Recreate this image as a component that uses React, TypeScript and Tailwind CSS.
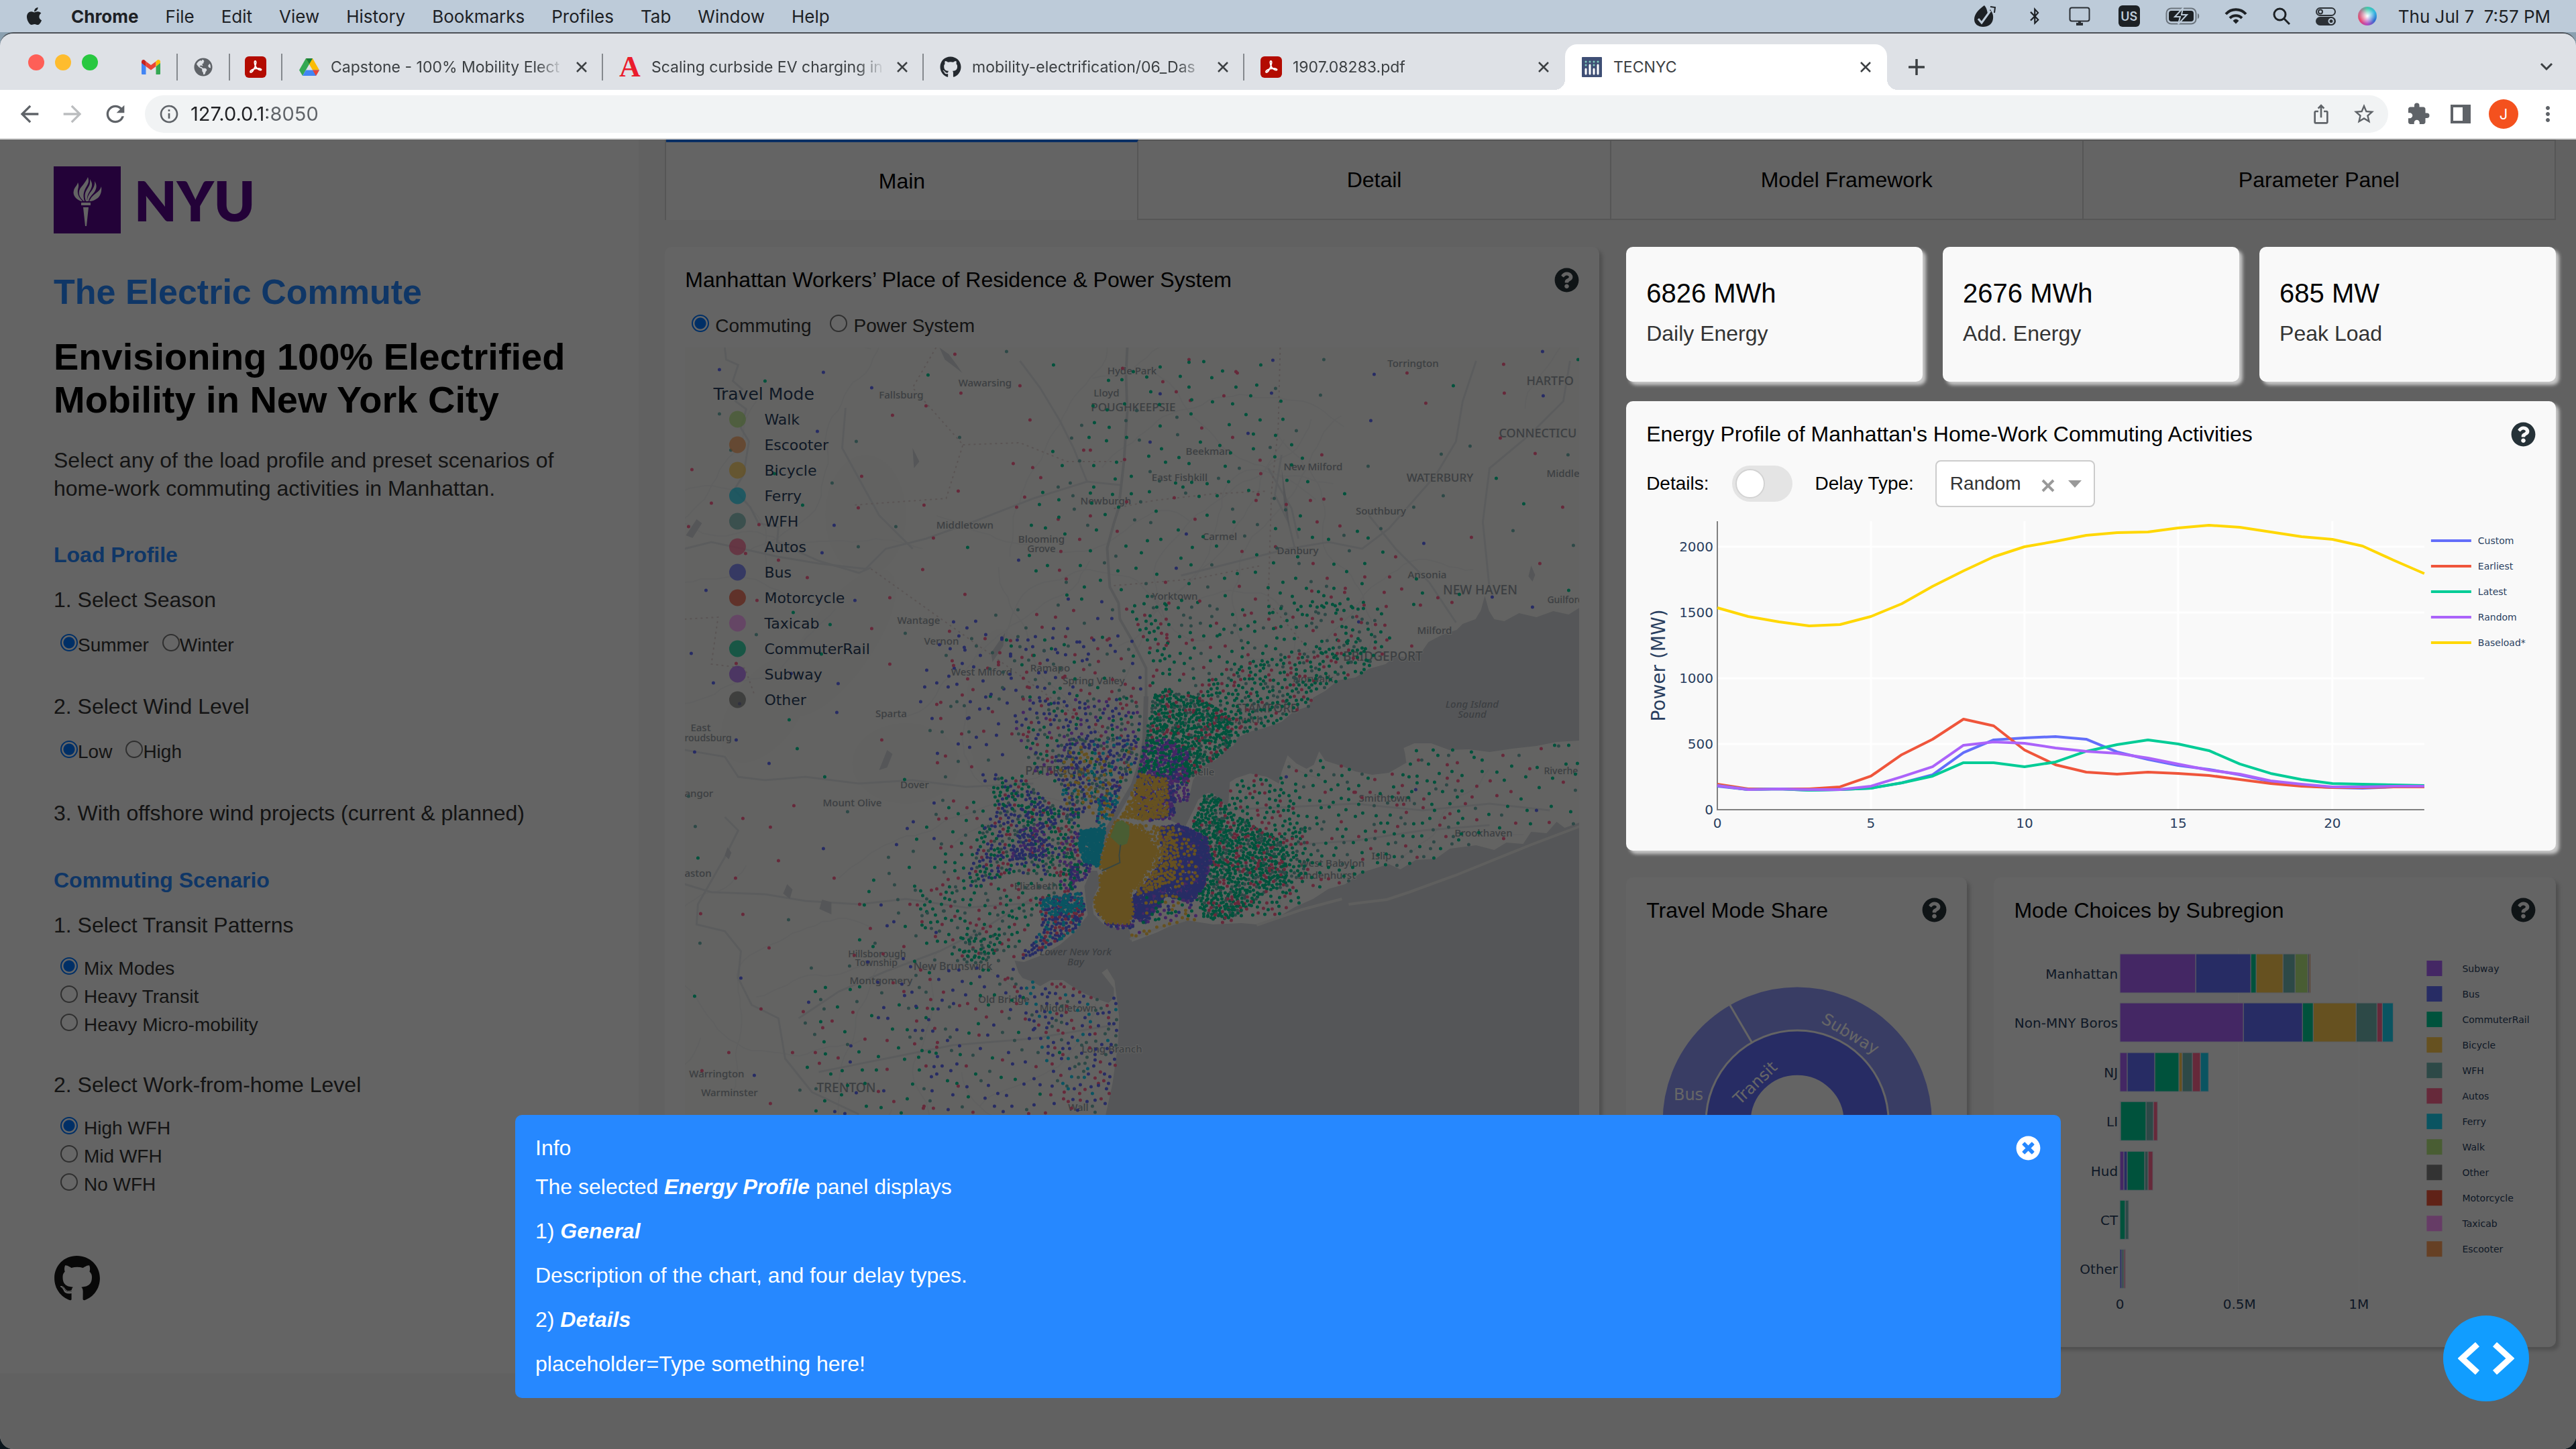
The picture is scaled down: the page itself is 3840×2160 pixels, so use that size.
import React from "react";
import {
  FaApple,
  FaBluetoothB,
  FaGithub,
  FaQuestionCircle,
  FaTimesCircle,
  FaGlobeAmericas,
} from "react-icons/fa";
import { MdExtension, MdStarBorder, MdInfoOutline, MdRefresh, MdArrowBack, MdArrowForward, MdIosShare, MdMoreVert } from "react-icons/md";

/* ---------- palette ---------- */

const MODE = {
  Walk: "#B6E880",
  Escooter: "#FFA15A",
  Bicycle: "#FECB52",
  Ferry: "#19D3F3",
  WFH: "#72B7B2",
  Autos: "#FF6692",
  Bus: "#636EFA",
  Motorcycle: "#EF553B",
  Taxicab: "#FF97FF",
  CommuterRail: "#00CC96",
  Subway: "#AB63FA",
  Other: "#7F7F7F",
} as const;
type Mode = keyof typeof MODE;

/* ---------- macOS menu bar ---------- */

const MENUS = ["File", "Edit", "View", "History", "Bookmarks", "Profiles", "Tab", "Window", "Help"];

function MenuBar() {
  return (
    <header className="flex h-12 shrink-0 items-center justify-between bg-[#bdcbd9] pl-9 pr-[38px] text-[26px] text-[#1d2125]">
      <nav className="flex items-center gap-10">
        <FaApple className="size-[30px]" />
        <button className="font-bold">Chrome</button>
        {MENUS.map((m) => (
          <button key={m}>{m}</button>
        ))}
      </nav>
      <div className="flex items-center">
        <svg viewBox="0 0 34 34" className="mr-[44px] size-[34px]">
          <path d="M16 1C9 6 1 13 1 22c0 7 6 11 13 11 8 0 14-4 15-12 1-7-2-10-4-14-2 2-3 4-4 6C20 8 19 4 16 1z" fill="#1d2125" />
          <path d="M7 21l5 6L25 9" fill="none" stroke="#bdcbd9" strokeWidth="3" />
          <path d="M25 3l7 1-1 8" fill="none" stroke="#1d2125" strokeWidth="2" />
        </svg>
        <FaBluetoothB className="mr-[38px] size-[26px]" />
        <svg viewBox="0 0 32 28" className="mr-[42px] h-[28px] w-[32px]" fill="none" stroke="#2c3136" strokeWidth="2">
          <rect x="1.5" y="1.5" width="29" height="20" rx="3" />
          <path d="M11 26h10M16 22v4" strokeWidth="4" />
        </svg>
        <span className="mr-[38px] flex size-8 items-center justify-center rounded-[6px] bg-[#1d2125] text-[18px] font-semibold text-[#bdcbd9]">
          US
        </span>
        <svg viewBox="0 0 52 26" className="mr-[36px] h-[26px] w-[52px]">
          <rect x="1.5" y="1.5" width="44" height="23" rx="7" fill="none" stroke="#6b747d" strokeWidth="2" />
          <rect x="5" y="5" width="37" height="16" rx="4" fill="#1d2125" />
          <path d="M48 9c3 1 3 7 0 8z" fill="#6b747d" />
          <path d="M26 1L14 14h8l-3 11 13-14h-8z" fill="#1d2125" stroke="#bdcbd9" strokeWidth="2" />
        </svg>
        <svg viewBox="0 0 34 24" className="mr-[38px] h-[24px] w-[34px]" fill="none" stroke="#1d2125" strokeWidth="4">
          <path d="M2 9C10 0 24 0 32 9" />
          <path d="M8 15c5-5 13-5 18 0" />
          <path d="M14 19c2-2 4-2 6 0l-3 3z" fill="#1d2125" strokeWidth="2" />
        </svg>
        <svg viewBox="0 0 26 26" className="mr-[38px] size-[26px]" fill="none" stroke="#1d2125" strokeWidth="3">
          <circle cx="10.500" cy="10.500" r="8.500" />
          <path d="M17 17l8 8" />
        </svg>
        <svg viewBox="0 0 30 27" className="mr-[33px] h-[27px] w-[30px]" stroke="#2c3136" strokeWidth="2">
          <rect x="1" y="1" width="28" height="11" rx="5.500" fill="none" />
          <circle cx="7" cy="6.500" r="3" fill="none" />
          <rect x="1" y="15" width="28" height="11" rx="5.500" fill="#2c3136" />
          <circle cx="23" cy="20.500" r="3.500" fill="#2c3136" stroke="#bdcbd9" />
        </svg>
        <span className="mr-[32px] size-7 rounded-full bg-[conic-gradient(#3fc9a8,#35b8e0,#2d6fd0,#b04ac0,#e8456f,#c0708f,#3fc9a8)]">
          <span className="block size-7 rounded-full bg-[radial-gradient(circle,#fff_0,transparent_60%)]" />
        </span>
        <span className="whitespace-pre">Thu Jul 7  7:57 PM</span>
      </div>
    </header>
  );
}

/* ---------- favicons ---------- */

const Gmail = () => (
  <svg viewBox="0 0 28 22" className="h-[22px] w-[28px]">
    <path d="M0 4v16.500c0 1 .5 1.500 1.500 1.500H6.500V10z" fill="#4285f4" />
    <path d="M28 4v16.500c0 1-.5 1.500-1.500 1.500h-5V10z" fill="#34a853" />
    <path d="M6.500 10V2.500L14 8l7.500-5.500V10L14 15.500z" fill="#ea4335" />
    <path d="M0 5V3C0 .5 3-1 5 .9l1.500 1.600V10z" fill="#c5221f" />
    <path d="M28 5V3c0-2.500-3-4-5-2.100l-1.500 1.600V10z" fill="#fbbc04" />
  </svg>
);
const Acrobat = () => (
  <svg viewBox="0 0 32 32" className="size-8">
    <rect width="32" height="32" rx="6" fill="#b30b00" />
    <path
      d="M15.500 7c-2 0-1 5 .5 8s5 6 8 5.500c2-1-1-3-6-2.500-4 .3-10 2.500-10 5 0 2 3 1 5.500-4S18 7 15.500 7z"
      fill="none"
      stroke="#fff"
      strokeWidth="1.800"
    />
  </svg>
);
const Drive = () => (
  <svg viewBox="0 0 30 26" className="h-[26px] w-[30px]">
    <path d="M10 0h10l-15 26L0 17.500z" fill="#34a853" />
    <path d="M10 0h10l10 17.500H20z" fill="#fbbc04" />
    <path d="M5 26l5-8.500h20L25 26z" fill="#4285f4" />
    <path d="M20 17.500h10L25 26z" fill="#ea4335" />
    <path d="M10 0h10l-5 8.700z" fill="#188038" />
  </svg>
);
const LetterA = () => (
  <span className="flex w-8 justify-center font-['Liberation_Serif',serif] text-[44px] font-bold leading-8 text-[#ea1c2c]">A</span>
);
const PlotlyIcon = () => (
  <svg viewBox="0 0 30 30" className="size-[30px]">
    <rect width="30" height="30" rx="1" fill="#3f4f75" />
    {[6, 12, 18, 24].map((x, i) => (
      <g key={x}>
        <circle cx={x} cy="7" r="1.500" fill="#80cfbe" />
        {i % 2 === 0 && <circle cx={x} cy="12" r="1.500" fill="#80cfbe" />}
        <path d={i % 2 ? `M${x} 12v13` : `M${x} 18v7`} stroke="#fff" strokeWidth="3" strokeLinecap="round" />
      </g>
    ))}
  </svg>
);

function CloseX() {
  return (
    <svg viewBox="0 0 16 16" className="size-4" stroke="#3c4043" strokeWidth="2.500">
      <path d="M1 1l14 14M15 1L1 15" />
    </svg>
  );
}

function Pinned({ children, label }: { children: React.ReactNode; label: string }) {
  return (
    <button aria-label={label} className="flex h-10 w-[78px] items-center justify-center border-r-2 border-[#85898e]">
      {children}
    </button>
  );
}

function BrowserTab({ icon, title, last }: { icon: React.ReactNode; title: string; last?: boolean }) {
  return (
    <div className={`flex h-10 w-[478px] items-center border-r-2 pl-6 pr-[22px] ${last ? "border-transparent" : "border-[#85898e]"}`}>
      <span className="flex w-8 shrink-0 justify-center">{icon}</span>
      <span className="ml-4 mr-[18px] flex-1 overflow-hidden whitespace-nowrap [mask-image:linear-gradient(to_right,#000_88%,transparent)]">
        {title}
      </span>
      <button aria-label="Close tab">
        <CloseX />
      </button>
    </div>
  );
}

function TabStrip() {
  return (
    <div className="flex h-[84px] shrink-0 items-end bg-[#dee1e6] pl-[42px] pr-[34px] text-[23px] text-[#3c4043]">
      <div className="mr-[41px] flex gap-4 self-start pt-[31px]">
        <span className="size-6 rounded-full bg-[#fe5f57]" />
        <span className="size-6 rounded-full bg-[#febc2e]" />
        <span className="size-6 rounded-full bg-[#28c840]" />
      </div>
      <div className="flex h-[68px] flex-1 items-center">
        <Pinned label="Gmail"><Gmail /></Pinned>
        <Pinned label="Web page"><FaGlobeAmericas className="size-7 text-[#5f6368]" /></Pinned>
        <Pinned label="PDF"><Acrobat /></Pinned>
        <BrowserTab icon={<Drive />} title="Capstone - 100% Mobility Elect" />
        <BrowserTab icon={<LetterA />} title="Scaling curbside EV charging in" />
        <BrowserTab icon={<FaGithub className="size-8 text-[#24292f]" />} title="mobility-electrification/06_Das" />
        <BrowserTab icon={<Acrobat />} title="1907.08283.pdf" last />
        <div className="relative flex h-full w-[480px] items-center rounded-t-[18px] bg-white pl-6 pr-6">
          <span className="absolute -left-4 bottom-0 size-4 bg-[radial-gradient(circle_at_0_0,transparent_16px,#fff_16px)]" />
          <span className="absolute -right-4 bottom-0 size-4 bg-[radial-gradient(circle_at_100%_0,transparent_16px,#fff_16px)]" />
          <span className="flex w-8 shrink-0 justify-center"><PlotlyIcon /></span>
          <span className="ml-4 flex-1">TECNYC</span>
          <button aria-label="Close tab"><CloseX /></button>
        </div>
        <button aria-label="New tab" className="ml-8">
          <svg viewBox="0 0 24 24" className="size-6" stroke="#3c4043" strokeWidth="3.500" strokeLinecap="round">
            <path d="M12 1v22M1 12h22" />
          </svg>
        </button>
        <button aria-label="Search tabs" className="ml-auto">
          <svg viewBox="0 0 20 12" className="h-3 w-5" fill="none" stroke="#3c4043" strokeWidth="3">
            <path d="M2 1l8 8 8-8" />
          </svg>
        </button>
      </div>
    </div>
  );
}

function Toolbar() {
  return (
    <div className="flex h-[74px] shrink-0 items-center border-b-2 border-[#d5d5d5] bg-white pl-6 pr-6 text-[#5f6368]">
      <button aria-label="Back" className="w-16"><MdArrowBack className="size-10" /></button>
      <button aria-label="Forward" className="w-16 text-[#bbbdbf]"><MdArrowForward className="size-10" /></button>
      <button aria-label="Reload" className="w-16"><MdRefresh className="size-10" /></button>
      <div className="flex h-14 flex-1 items-center rounded-full bg-[#f1f3f4] pl-5 pr-[18px]">
        <MdInfoOutline className="mr-4 size-8" />
        <input
          aria-label="Address"
          defaultValue="127.0.0.1:8050"
          className="min-w-0 flex-1 bg-[linear-gradient(to_right,#202124_114px,#5f6368_114px)] bg-clip-text text-[29px] text-transparent outline-none"
        />
        <button aria-label="Share" className="mr-[30px]"><MdIosShare className="size-8" /></button>
        <button aria-label="Bookmark"><MdStarBorder className="size-9" /></button>
      </div>
      <button aria-label="Extensions" className="ml-[27px]"><MdExtension className="size-9" /></button>
      <button aria-label="Side panel" className="ml-[30px]">
        <svg viewBox="0 0 30 28" className="h-7 w-[30px]" fill="none" stroke="#5f6368">
          <rect x="2" y="2" width="26" height="24" strokeWidth="4" />
          <path d="M23 2v24" strokeWidth="10" />
        </svg>
      </button>
      <button className="ml-[27px] size-11 rounded-full bg-[#f4511e] text-[22px] text-white">J</button>
      <button aria-label="More" className="ml-[26px]"><MdMoreVert className="size-9" /></button>
    </div>
  );
}

/* ---------- sidebar ---------- */

function Radio({ name, label, checked, gap }: { name: string; label: string; checked?: boolean; gap?: boolean }) {
  return (
    <label className={`flex items-baseline ${gap ? "gap-[9px]" : ""}`}>
      <input
        type="radio"
        name={name}
        defaultChecked={checked}
        className="size-[26px] shrink-0 appearance-none rounded-full border-2 border-[#767676] bg-white bg-clip-padding checked:border-[#0075ff] checked:bg-[radial-gradient(circle,#0075ff_8px,#fff_9px)]"
      />
      <span>{label}</span>
    </label>
  );
}

function StackedRadios({ name, items }: { name: string; items: string[] }) {
  return (
    <div className="mt-6 flex flex-col pl-[10px] text-[28px] leading-[42px]">
      {items.map((t, i) => (
        <Radio key={t} name={name} label={t} checked={i === 0} gap />
      ))}
    </div>
  );
}

function InlineRadios({ name, items }: { name: string; items: string[] }) {
  return (
    <div className="mt-[31px] flex gap-[20px] pl-[10px] text-[28px] leading-8">
      {items.map((t, i) => (
        <Radio key={t} name={name} label={t} checked={i === 0} />
      ))}
    </div>
  );
}

function Sidebar() {
  return (
    <aside className="w-[24.8%] shrink-0 self-start bg-[#f9f9f9] px-20 pb-[106px] pt-10 text-[32px] leading-10 text-[#333]">
      <div className="flex h-[100px] items-center gap-[20px] text-[#57068c]">
        <svg viewBox="0 0 100 100" className="size-[100px]">
          <rect width="100" height="100" fill="#57068c" />
          <g fill="#f9f9f9">
            <path d="M41 52c-8-3-13-9-11-16 1-5 5-7 6-12 2 4 1 7 0 11-1 6 2 12 7 17z" />
            <path d="M45 52c-7-6-9-12-6-18 2-4 8-9 12-18 2 6 1 9-2 14-4 7-6 12-3 22z" />
            <path d="M48 52c-3-9-1-14 3-20 2-3 4-7 3-13 4 6 4 10 1 16-3 5-6 9-5 17z" />
            <path d="M50 52c0-7 3-11 6-15 3-4 6-9 5-15 4 6 3 11 0 16-4 5-8 8-9 14z" />
            <path d="M53 52c3-6 5-8 10-12 4-3 7-6 8-10 1 7-1 13-5 17-4 3-8 5-13 5z" />
            <path d="M41 54h14v4H41zM44 61h8l-3 28h-2z" />
          </g>
        </svg>
        <span className="font-['Lato',sans-serif] text-[82px] font-extrabold leading-[100px]">NYU</span>
      </div>
      <h1 className="mt-[55px] text-[52px] font-bold leading-[64px] text-[#2688ff]">The Electric Commute</h1>
      <h2 className="mt-[33px] text-[56px] font-bold leading-[64px] text-black">
        Envisioning 100% Electrified
        <br />
        Mobility in New York City
      </h2>
      <p className="mt-[37px] leading-[42px]">
        Select any of the load profile and preset scenarios of
        <br />
        home-work commuting activities in Manhattan.
      </p>
      <h3 className="mt-[58px] font-bold text-[#2688ff]">Load Profile</h3>
      <p className="mt-[27px]">1. Select Season</p>
      <InlineRadios name="season" items={["Summer", "Winter"]} />
      <p className="mt-[55px]">2. Select Wind Level</p>
      <InlineRadios name="wind" items={["Low", "High"]} />
      <p className="mt-[55px]">3. With offshore wind projects (current &amp; planned)</p>
      <h3 className="mt-[60px] font-bold text-[#2688ff]">Commuting Scenario</h3>
      <p className="mt-[27px]">1. Select Transit Patterns</p>
      <StackedRadios name="transit" items={["Mix Modes", "Heavy Transit", "Heavy Micro-mobility"]} />
      <p className="mt-12">2. Select Work-from-home Level</p>
      <StackedRadios name="wfh" items={["High WFH", "Mid WFH", "No WFH"]} />
      <a href="#github" aria-label="GitHub" className="mt-[84px] block">
        <FaGithub className="size-[70px] text-[#141414]" />
      </a>
    </aside>
  );
}

/* ---------- map ---------- */

type Pt = [number, number];

const SOUND: Pt[] = [
  [1334, 388], [1318, 398], [1295, 393], [1270, 402], [1244, 396], [1222, 408], [1207, 405], [1199, 392], [1193, 370], [1187, 392], [1179, 405], [1160, 412],
  [1151, 421], [1130, 428], [1109, 439], [1100, 452], [1076, 462], [1060, 460], [1045, 472], [1020, 479], [1000, 492], [974, 496], [955, 512], [937, 522], [930, 535],
  [909, 542], [890, 558], [862, 568], [845, 572], [825, 581], [818, 594], [809, 598], [792, 615], [780, 620], [767, 630], [758, 645], [754, 662], [749, 677],
  [735, 676], [727, 682], [732, 694], [722, 704], [746, 715], [756, 695], [766, 674], [780, 664], [790, 666], [800, 676], [808, 684], [811, 677], [813, 648], [822, 642], [843, 635],
  [868, 640], [886, 650], [890, 633], [899, 608], [912, 620], [927, 628], [938, 622], [946, 602], [955, 616], [980, 624], [1000, 632],
  [1025, 637], [1050, 634], [1076, 619], [1074, 605], [1072, 597], [1088, 590], [1113, 590], [1140, 600], [1169, 599], [1200, 603], [1234, 598],
  [1270, 594], [1300, 588], [1334, 586],
];
const OCEAN: Pt[] = [
  [1334, 708], [1312, 716], [1300, 707], [1285, 724], [1262, 722], [1250, 740], [1225, 738], [1207, 749], [1180, 742], [1141, 747], [1120, 762],
  [1090, 764], [1067, 778], [1050, 770], [1008, 783], [985, 800], [960, 807], [937, 822], [910, 834], [890, 846], [853, 860], [830, 858],
  [788, 860], [750, 854], [725, 862], [704, 872], [667, 886], [665, 876], [662, 864], [645, 866], [625, 860], [610, 845], [608, 832], [611, 817], [620, 798], [615, 780],
  [606, 780], [596, 803], [599, 832], [601, 846], [582, 871], [560, 890], [535, 905], [506, 916], [492, 914], [498, 932],
  [504, 940], [520, 946], [530, 952], [546, 943], [564, 943], [586, 958], [611, 970], [632, 977], [640, 970], [640, 955], [622, 932], [630, 926], [641, 944],
  [648, 999], [646, 1039], [638, 1097], [628, 1143], [600, 1460], [1334, 1460],
];
const HUDSON: Pt[] = [
  [618, 769], [622, 745], [630, 720], [648, 688], [669, 652], [680, 620], [686, 585], [688, 520], [688, 478], [668, 438], [649, 405], [647, 381], [634, 357],
  [630, 299], [640, 262], [647, 240], [655, 170], [660, 95], [658, 40], [660, 0],
];

const toPoints = (p: Pt[]) => p.map((q) => q.join(",")).join(" ");

function inside(x: number, y: number, poly: Pt[]) {
  let hit = false;
  for (let i = 0, j = poly.length - 1; i < poly.length; j = i++) {
    const [xi, yi] = poly[i];
    const [xj, yj] = poly[j];
    if (yi > y !== yj > y && x < ((xj - xi) * (y - yi)) / (yj - yi) + xi) hit = !hit;
  }
  return hit;
}

function makeRandom(seed: number) {
  let s = seed;
  return () => {
    s = (s * 1664525 + 1013904223) >>> 0;
    return s / 4294967296;
  };
}

/* Zones of the metro core are listed on a finer grid than the map itself. */
const core = (p: Pt[]): Pt[] => p.map(([x, y]) => [378 + x * 0.4847, 381 + y * 0.4847]);

const G: Mode = "CommuterRail";
const B: Mode = "Bus";
const A: Mode = "Autos";
const W: Mode = "WFH";
const S: Mode = "Subway";
const F: Mode = "Ferry";
const Y: Mode = "Bicycle";

/* [outline, spacing between dots, modes] */
type Zone = [Pt[], number, Mode[]];
const ZONES: Zone[] = [
  [[[0, 0], [1334, 0], [1334, 700], [660, 640], [620, 1143], [0, 1143]], 66, [A, B, W, A, G]],
  [[[655, 20], [860, 20], [980, 250], [1150, 380], [900, 400], [660, 400], [520, 360], [500, 200]], 28, [G, G, G, G, A, W]],
  [[[380, 420], [530, 370], [640, 380], [640, 430], [378, 620], [340, 500]], 25, [B, A, W, B]],
  [[[290, 770], [378, 660], [400, 920], [230, 930]], 26, [G, G, A, W, B]],
  [[[170, 950], [378, 930], [378, 1143], [190, 1143]], 23, [G, G, G, A, B, W]],
  [core([[580, 0], [700, 0], [720, 280], [665, 280], [640, 130]]), 11, [G, G, G, G, A]],
  [core([[700, 0], [1300, 0], [1400, 120], [1330, 200], [1130, 150], [860, 220], [780, 280], [700, 280]]), 16, [G, G, G, W, A]],
  [core([[1130, -80], [1350, 0], [1400, 120], [1250, 120], [1130, 100]]), 15, [G, G, G, W, A]],
  [core([[780, 290], [860, 220], [960, 180], [1130, 150], [1290, 110], [1350, 210], [1200, 300], [1100, 360], [960, 420], [880, 440], [860, 360]]), 8, [G, G, G, G, W, A]],
  [core([[665, 280], [700, 270], [800, 290], [900, 350], [900, 440], [800, 520], [765, 560], [735, 550], [770, 450], [700, 415], [636, 430]]), 5, [G, G, G, G, G, A, W]],
  [core([[634, 430], [700, 415], [770, 450], [772, 540], [740, 550], [690, 535], [616, 525]]), 4, [S, S, B, G, G]],
  [core([[690, 535], [770, 530], [772, 610], [740, 670], [690, 620]]), 6, [S, S, B]],
  [core([[200, 100], [600, 100], [632, 290], [260, 300]]), 15, [B, A, W, G, B]],
  [core([[0, 100], [200, 100], [260, 300], [200, 540], [0, 540]]), 24, [B, A, W, B]],
  [core([[280, 300], [610, 290], [630, 380], [600, 540], [500, 600], [420, 650], [380, 560], [300, 520], [230, 380]]), 9, [B, G, W, A, B, S]],
  [core([[370, 420], [610, 410], [585, 560], [480, 620], [400, 680], [370, 540]]), 8, [B, B, Y, W, F, B]],
  [core([[380, 450], [540, 480], [520, 640], [400, 660]]), 13, [Y]],
  [core([[170, 540], [260, 530], [330, 610], [440, 640], [430, 760], [400, 840], [220, 830], [130, 870], [80, 880], [130, 720], [170, 620]]), 7, [G, B, W, A, B, G]],
  [core([[210, 560], [300, 600], [380, 640], [360, 700], [200, 640]]), 9, [G, B]],
  [core([[250, 690], [330, 680], [340, 780], [220, 790]]), 6, [B, S, B]],
  [core([[380, 720], [430, 700], [440, 800], [400, 900], [370, 870]]), 7, [S, S, G, A]],
  [core([[0, 600], [170, 600], [130, 720], [60, 900], [0, 900]]), 16, [G, W, G, A]],
  [core([[-80, 880], [320, 850], [390, 880], [320, 910], [240, 1060], [180, 1110], [60, 1100], [-40, 1010]]), 12, [G, G, W, A]],
  [core([[70, 1020], [190, 1010], [190, 1100], [80, 1110]]), 8, [G, G, W]],
  [core([[-120, 1130], [240, 1110], [300, 1330], [400, 1568], [-60, 1568]]), 19, [B, A, G, B, W]],
  [core([[200, 1150], [340, 1170], [550, 1210], [550, 1400], [515, 1568], [400, 1568], [300, 1330]]), 11, [B, F, W, B, A]],
  [core([[310, 910], [440, 890], [458, 950], [420, 1010], [330, 1060], [262, 1100], [255, 1080], [320, 1000]]), 5, [B, B, F, A, B]],
  [core([[310, 910], [440, 890], [450, 945], [360, 960]]), 5, [F]],
  [core([[495, 600], [560, 570], [555, 620], [515, 690], [480, 680]]), 5, [F, F, B, Y]],
  [core([[440, 700], [515, 690], [495, 810], [450, 800], [430, 740]]), 3, [F]],
  [core([[410, 790], [480, 810], [440, 860], [400, 890]]), 5, [S, B, G]],
  [core([[820, 585], [870, 590], [890, 640], [1000, 700], [1060, 740], [1080, 860], [1000, 900], [900, 970], [820, 970], [790, 900], [830, 800], [780, 680]]), 5, [G, G, G, G, A, G, W]],
  [core([[890, 560], [950, 520], [1070, 540], [1130, 700], [1060, 740], [890, 640]]), 10, [G, G, G, A]],
  [core([[1050, 720], [1130, 690], [1140, 850], [1060, 900]]), 7, [G, G, G, W, A]],
  [core([[820, 960], [1100, 880], [1130, 930], [1000, 970], [850, 985]]), 10, [G, G, A]],
  [core([[1060, 470], [1620, 430], [1620, 790], [1150, 880], [1120, 700]]), 15, [G, G, W, A, G]],
  [[[1160, 600], [1334, 590], [1334, 710], [1160, 745]], 24, [G, A, G, W]],
  [core([[616, 525], [720, 540], [735, 640], [720, 665], [640, 670], [600, 640]]), 4, [B, S]],
  [core([[620, 525], [700, 535], [712, 590], [705, 655], [640, 668], [560, 660], [590, 600]]), 4, [Y]],
  [core([[680, 690], [740, 680], [825, 720], [840, 800], [812, 880], [780, 920], [700, 900], [640, 985], [590, 960], [600, 900], [650, 850], [690, 780]]), 3, [B, B, B, S]],
  [core([[600, 680], [730, 690], [730, 850], [640, 890], [600, 900]]), 5, [Y]],
  [core([[720, 690], [790, 740], [800, 860], [720, 880]]), 8, [Y]],
  [core([[640, 900], [790, 900], [780, 960], [620, 985]]), 7, [B, S, G, Y]],
  [core([[592, 1015], [700, 978], [790, 955], [795, 972], [700, 1000], [600, 1030]]), 8, [Y, S]],
  [core([[510, 985], [600, 975], [600, 1000], [515, 1000]]), 4, [S, B]],
];

const YELLOW_CORE = core([
  [548, 668], [590, 680], [640, 710], [670, 760], [660, 790], [630, 840], [590, 890], [600, 950], [585, 985], [520, 982], [484, 940], [482, 910], [500, 880], [498, 840],
  [530, 815], [500, 815], [505, 780], [520, 730],
]);

function buildDots() {
  const rnd = makeRandom(20220707);
  const isWater = (x: number, y: number) => inside(x, y, SOUND) || inside(x, y, OCEAN);
  return ZONES.map(([poly, gap, modes]) => {
    const xs = poly.map((p) => p[0]);
    const ys = poly.map((p) => p[1]);
    const x0 = Math.min(...xs);
    const y0 = Math.min(...ys);
    const w = Math.max(...xs) - x0;
    const h = Math.max(...ys) - y0;
    const cell = gap;
    const grid = new Map<string, Pt[]>();
    const tries = Math.round(((w * h) / (gap * gap)) * 3);
    const min = (gap * 0.65) ** 2;
    const local: Partial<Record<Mode, string>> = {};
    for (let i = 0; i < tries; i++) {
      const x = x0 + rnd() * w;
      const y = y0 + rnd() * h;
      const m = modes[Math.floor(rnd() * modes.length)];
      if (x < 2 || x > 1332 || y < 3 || !inside(x, y, poly) || isWater(x, y)) continue;
      const gx = Math.floor(x / cell);
      const gy = Math.floor(y / cell);
      let near = false;
      for (let a = -1; a <= 1 && !near; a++) {
        for (let b = -1; b <= 1 && !near; b++) {
          const list = grid.get(`${gx + a},${gy + b}`);
          near = !!list && list.some((q) => (q[0] - x) ** 2 + (q[1] - y) ** 2 < min);
        }
      }
      if (near) continue;
      const key = `${gx},${gy}`;
      grid.set(key, [...(grid.get(key) ?? []), [x, y]]);
      local[m] = (local[m] ?? "") + `M${Math.round(x)} ${Math.round(y)}h.01`;
    }
    return local;
  });
}
const DOTS = buildDots();

function buildRoads() {
  const rnd = makeRandom(77);
  const roads: string[] = [];
  for (let i = 0; i < 60; i++) {
    let x = rnd() * 1334;
    let y = rnd() * 1143;
    let a = rnd() * 6.28;
    let d = `M${Math.round(x)} ${Math.round(y)}`;
    for (let k = 0; k < 34; k++) {
      a += (rnd() - 0.5) * 0.7;
      x += Math.cos(a) * 12;
      y += Math.sin(a) * 12;
      if (inside(x, y, SOUND) || inside(x, y, OCEAN)) break;
      d += `L${Math.round(x)} ${Math.round(y)}`;
    }
    roads.push(d);
  }
  return roads;
}
const ROADS = buildRoads();

const RIVERS = [
  "M60 0L62 18L80 26L72 50L86 62L76 80L92 92L84 120L96 140L88 190L74 212L98 238L110 262L140 268L138 290L160 300L200 318L260 336L278 328",
  "M0 300L40 290L86 300L140 312L200 322L270 330L300 300L360 285L430 260L520 225L600 200L650 205",
  "M600 200L580 150L560 110L530 60L500 20M240 90L235 150L290 250L340 300",
  "M0 600L60 610L80 640L120 645L180 640L260 650L340 645L420 655L520 650",
  "M60 700L80 720L60 760L20 830L18 860L60 870L84 900L80 940L100 980L140 1000L150 1060L190 1110L260 1143",
  "M0 800L40 812L120 815L180 825L260 830L330 822L420 835L520 828",
  "M890 160L880 220L900 260L910 300M870 180L905 240L915 285",
  "M1180 20L1160 80L1150 140L1120 190L1050 270L1010 300L960 290L900 300L820 320L740 340",
  "M170 1000L230 960L300 930L380 900L440 870L520 820M200 1080L300 1060L400 1040L520 1030L640 1010",
  "M790 690L900 685L1000 680L1100 690L1200 680L1290 690M800 740L900 742L1000 735L1100 720L1200 712",
  "M1320 20L1310 80L1260 130L1200 180L1190 260L1200 360M1020 250L1060 300L1110 350L1150 410",
];

type Label = [string, number, number, number?, ("start" | "middle")?, boolean?];
const LABELS: Label[] = [
  ["Torrington", 1086, 29], ["HARTFO", 1255, 56, 18, "start"], ["Hyde Park", 667, 40], ["Wawarsing", 448, 58],
  ["Fallsburg", 323, 76], ["Lloyd", 629, 73], ["POUGHKEEPSIE", 669, 95, 17], ["CONNECTICU", 1214, 134, 18, "start"],
  ["Beekman", 781, 160], ["New Milford", 937, 183], ["WATERBURY", 1126, 200, 17], ["Middle", 1285, 193, 15, "start"],
  ["East Fishkill", 738, 199], ["Newburgh", 628, 234], ["Southbury", 1038, 249], ["Middletown", 418, 270],
  ["Blooming", 532, 291], ["Grove", 532, 305], ["Carmel", 798, 287], ["Danbury", 914, 308], ["Ansonia", 1107, 344],
  ["NEW HAVEN", 1186, 368, 19], ["Guilford", 1286, 381, 14, "start"], ["Yorktown", 731, 376], ["Wantage", 349, 412],
  ["Milford", 1118, 427], ["Vernon", 383, 443], ["West Milford", 443, 489], ["Ramapo", 545, 483],
  ["Spring Valley", 610, 502], ["BRIDGEPORT", 1041, 467, 19], ["Norwalk", 937, 499], ["STAMFORD", 869, 544, 18],
  ["Greenwich", 824, 560], ["Sparta", 308, 551], ["Long Island", 1174, 537, 15, "middle", true],
  ["Sound", 1174, 552, 15, "middle", true], ["East", 24, 572], ["roudsburg", 0, 587, 14, "start"],
  ["PATERSON", 553, 637, 18], ["chelle", 769, 638], ["Dover", 343, 657], ["angor", 0, 670, 15, "start"],
  ["Mount Olive", 250, 684], ["Smithtown", 1044, 677], ["Riverhe", 1281, 636, 14, "start"], ["Brookhaven", 1191, 729],
  ["Islip", 1039, 763], ["West Babylon", 965, 774], ["Lindenhurst", 957, 792], ["aston", 0, 789, 15, "start"],
  ["Elizabeth", 524, 808], ["Lower New York", 583, 906, 15, "middle", true], ["Bay", 583, 921, 15, "middle", true],
  ["Hillsborough", 287, 909, 14], ["Township", 286, 922, 14], ["New Brunswick", 400, 928, 16], ["Montgomery", 293, 949],
  ["Old Bridge", 476, 977], ["Middletown", 572, 990], ["Long Branch", 637, 1051], ["Warrington", 48, 1088],
  ["TRENTON", 241, 1110, 19], ["Warminster", 67, 1116], ["Wall", 587, 1138],
];

const MAP_LEGEND: Mode[] = [
  "Walk", "Escooter", "Bicycle", "Ferry", "WFH", "Autos", "Bus", "Motorcycle", "Taxicab", "CommuterRail", "Subway", "Other",
];

function MapChart() {
  return (
    <svg viewBox="0 0 1334 1460" preserveAspectRatio="xMidYMin slice" className="mt-3 min-h-0 w-full flex-1">
      <rect width="1334" height="1460" fill="#f8f8f4" />
      <g fill="#f4f5f3">
        <ellipse cx="270" cy="250" rx="60" ry="90" />
        <ellipse cx="230" cy="440" rx="50" ry="130" transform="rotate(35 230 440)" />
        <ellipse cx="470" cy="540" rx="50" ry="120" />
        <ellipse cx="330" cy="620" rx="80" ry="60" />
        <ellipse cx="120" cy="540" rx="50" ry="90" transform="rotate(35 120 540)" />
      </g>
      <g fill="none" stroke="#eff1f1" strokeWidth="2">
        {ROADS.map((d) => (
          <path key={d} d={d} />
        ))}
      </g>
      <g fill="none" stroke="#e4e7e9" strokeWidth="3">
        {RIVERS.map((d) => (
          <path key={d} d={d} />
        ))}
      </g>
      <g fill="none" stroke="#e0d3d3" strokeWidth="2" strokeDasharray="3 5">
        <path d="M375 0L340 60L415 145L390 225L250 235M415 145L500 142L570 170L655 170" />
        <path d="M278 330L460 460L640 590M888 0L885 120L875 215L870 380L930 450" />
        <path d="M640 240L700 228L790 218L870 214M640 355L760 345L860 325" />
        <path d="M0 405L50 402L40 472L90 478L105 520" />
      </g>
      <g fill="#d4d7dc">
        <polygon points={toPoints(SOUND)} />
        <polygon points={toPoints(OCEAN)} />
        <path d="M380 0l14 10 12 16 8 12-10-8-16-12z" />
        <path d="M478 425l-3 20-16 24-2-14zM205 823l14 4 0 18-18-8zM302 600l8 6-8 20-12 4zM890 180l8 50 4 40-8-30z" />
        <path d="M2 280l16-24 8 6-14 22zM64 745l6 8-4 10-6-6zM153 800l8 8-4 14-10-8zM340 150l10 20-8 10zM1262 325l6 14-4 10-6-8z" />
      </g>
      <polyline points={toPoints(HUDSON)} fill="none" stroke="#dcdfe2" strokeWidth="4" />
      <polyline points="618,769 622,745 630,720 648,688 669,652 680,620 686,585 688,520" fill="none" stroke="#d4d7dc" strokeWidth="7" />
      <path d="M1334 714L1260 742L1149 787L1080 812L1047 823L990 830M980 822L920 838L853 861" fill="none" stroke="#eeeeea" strokeWidth="4" />
      <path d="M664 882L700 868L750 852" fill="none" stroke="#f0f0ec" strokeWidth="4" />
      <g fontFamily="Noto Sans, sans-serif" fontWeight="500" fill="#979ea6" stroke="#f4f4f1" strokeWidth="2" paintOrder="stroke">
        {LABELS.map(([t, x, y, size = 15, anchor = "middle", it]) => (
          <text key={t + x} x={x} y={y} fontSize={size} textAnchor={anchor} fontStyle={it ? "italic" : "normal"} strokeWidth={it ? 0 : 2}>
            {t}
          </text>
        ))}
      </g>
      <g fill="none" strokeLinecap="round" strokeWidth="5">
        {DOTS.map((layer, i) => (
          <g key={i}>
            {(Object.keys(layer) as Mode[]).map((m) => (
              <path key={m} d={layer[m]} stroke={MODE[m]} />
            ))}
          </g>
        ))}
      </g>
      <polygon points={toPoints(YELLOW_CORE)} fill={MODE.Bicycle} stroke={MODE.Bicycle} strokeWidth="5" strokeLinejoin="round" strokeDasharray="5 2" />
      <polygon points="645,709 652,707 661,714 661,727 658,738 650,741 637,729" fill={MODE.Walk} stroke={MODE.Walk} strokeWidth="4" />
      <path d="M650 741L648 757L649 768L636 774L622 780" fill="none" stroke="#8fb0a0" strokeWidth="2" />
      <g fontFamily="DejaVu Sans, Verdana, sans-serif" fill="#2a3f5f">
        <text x="43" y="78" fontSize="25">Travel Mode</text>
        {MAP_LEGEND.map((m, i) => (
          <g key={m} transform={`translate(0 ${107 + i * 38})`}>
            <circle cx="79" r="12.500" fill={MODE[m]} opacity="0.75" />
            <text x="119" y="8" fontSize="22">{m}</text>
          </g>
        ))}
      </g>
    </svg>
  );
}

/* ---------- energy chart ---------- */

const SERIES: { name: string; color: string; v: number[] }[] = [
  { name: "Custom", color: "#636EFA", v: [180, 155, 160, 150, 155, 165, 205, 265, 435, 530, 545, 558, 538, 440, 385, 335, 305, 265, 215, 185, 168, 165, 175, 172] },
  { name: "Earliest", color: "#EF553B", v: [195, 160, 160, 158, 172, 255, 420, 535, 688, 637, 455, 340, 285, 270, 285, 275, 262, 232, 200, 180, 168, 166, 172, 175] },
  { name: "Latest", color: "#00CC96", v: [183, 152, 158, 148, 152, 162, 205, 255, 357, 360, 325, 365, 445, 495, 530, 500, 447, 345, 275, 230, 197, 193, 188, 185] },
  { name: "Random", color: "#AB63FA", v: [185, 155, 160, 155, 155, 178, 250, 325, 490, 515, 505, 468, 445, 430, 395, 348, 302, 270, 220, 192, 175, 172, 177, 180] },
  { name: "Baseload*", color: "#FFD700", v: [1535, 1470, 1428, 1400, 1410, 1470, 1570, 1700, 1820, 1925, 2000, 2045, 2090, 2110, 2115, 2145, 2165, 2150, 2115, 2080, 2060, 2005, 1900, 1800] },
];
const ex = (i: number) => Math.round(106 + (i * 1054) / 23);
const ey = (v: number) => Math.round(437 - v * 0.1958);

function EnergyChart() {
  return (
    <svg viewBox="0 0 1326 480" className="mt-[14px] w-full" fontFamily="DejaVu Sans, Verdana, sans-serif" fill="#2a3f5f">
      <g stroke="#fff" strokeWidth="3">
        {[5, 10, 15, 20].map((i) => (
          <path key={i} d={`M${ex(i)} 7V437`} />
        ))}
        {[500, 1000, 1500, 2000].map((v) => (
          <path key={v} d={`M106 ${ey(v)}H1160`} />
        ))}
      </g>
      <path d="M106 7V437H1160" fill="none" stroke="#808080" strokeWidth="2" />
      {SERIES.map((s) => (
        <polyline
          key={s.name}
          points={s.v.map((v, i) => `${ex(i)},${ey(v)}`).join(" ")}
          fill="none"
          stroke={s.color}
          strokeWidth="4"
          strokeLinejoin="round"
        />
      ))}
      <g fontSize="20" textAnchor="end">
        {[0, 500, 1000, 1500, 2000].map((v) => (
          <text key={v} x="100" y={ey(v) + 7}>{v}</text>
        ))}
      </g>
      <g fontSize="20" textAnchor="middle">
        {[0, 5, 10, 15, 20].map((i) => (
          <text key={i} x={ex(i)} y="464">{i}</text>
        ))}
      </g>
      <text transform="translate(28 222) rotate(-90)" fontSize="28" textAnchor="middle">Power (MW)</text>
      <g fontSize="14">
        {SERIES.map((s, i) => (
          <g key={s.name} transform={`translate(1170 ${36 + i * 38})`}>
            <path d="M0 0H60" stroke={s.color} strokeWidth="4" />
            <text x="70" y="5">{s.name}</text>
          </g>
        ))}
      </g>
    </svg>
  );
}

/* ---------- sunburst ---------- */

function Sunburst() {
  return (
    <svg viewBox="0 0 448 580" className="mt-6 w-full" fontFamily="DejaVu Sans, Verdana, sans-serif">
      <g stroke="#f9f9f9" strokeWidth="3">
        <circle cx="225" cy="270" r="202" fill="#9098f9" />
        <circle cx="225" cy="270" r="136" fill="#636EFA" />
        <circle cx="225" cy="270" r="68" fill="#f9f9f9" />
        <path d="M158 153L124 95" />
      </g>
      <g fill="#fff" fontSize="24" textAnchor="middle">
        <text x="63" y="238">Bus</text>
        <text transform="translate(300 146) rotate(31)">Subway</text>
        <text transform="translate(168 218) rotate(-44)">Transit</text>
      </g>
    </svg>
  );
}

/* ---------- stacked bars ---------- */

const REGIONS: { name: string; parts: [Mode, number][] }[] = [
  { name: "Manhattan", parts: [["Subway", 113], ["Bus", 82], ["CommuterRail", 8], ["Bicycle", 40], ["WFH", 18], ["Walk", 19], ["Other", 2], ["Escooter", 2]] },
  { name: "Non-MNY Boros", parts: [["Subway", 184], ["Bus", 88], ["CommuterRail", 16], ["Bicycle", 64], ["WFH", 31], ["Autos", 8], ["Ferry", 16]] },
  { name: "NJ", parts: [["Subway", 11], ["Bus", 41], ["CommuterRail", 36], ["Bicycle", 5], ["WFH", 15], ["Autos", 12], ["Ferry", 12]] },
  { name: "LI", parts: [["Subway", 1], ["CommuterRail", 38], ["WFH", 11], ["Autos", 6]] },
  { name: "Hud", parts: [["Subway", 6], ["Bus", 5], ["CommuterRail", 26], ["WFH", 5], ["Autos", 7]] },
  { name: "CT", parts: [["CommuterRail", 8], ["WFH", 5]] },
  { name: "Other", parts: [["Bus", 3], ["WFH", 3], ["Autos", 2]] },
];
const BAR_LEGEND: Mode[] = [
  "Subway", "Bus", "CommuterRail", "Bicycle", "WFH", "Autos", "Ferry", "Walk", "Other", "Motorcycle", "Taxicab", "Escooter",
];

function RegionBars() {
  return (
    <svg viewBox="0 0 777 570" className="mt-6 w-full" fontFamily="DejaVu Sans, Verdana, sans-serif" fill="#2a3f5f">
      <g stroke="#fff" strokeWidth="2">
        <path d="M335 12V528M514 12V528" />
      </g>
      {REGIONS.map((r, i) => {
        let x = 158;
        return (
          <g key={r.name} transform={`translate(0 ${Math.round(20 + i * 73.4)})`}>
            <text x="155" y="37" fontSize="20" textAnchor="end">{r.name}</text>
            {r.parts.map(([m, w]) => {
              const at = x;
              x += w;
              return <rect key={m} x={at} width={w} height="58" fill={MODE[m]} stroke="#e5ecf6" strokeWidth="1" />;
            })}
          </g>
        );
      })}
      <g fontSize="20" textAnchor="middle">
        <text x="158" y="549">0</text>
        <text x="336" y="549">0.5M</text>
        <text x="514" y="549">1M</text>
      </g>
      <g fontSize="14">
        {BAR_LEGEND.map((m, i) => (
          <g key={m} transform={`translate(615 ${30 + i * 38})`}>
            <rect width="23" height="23" fill={MODE[m]} />
            <text x="53" y="17">{m}</text>
          </g>
        ))}
      </g>
    </svg>
  );
}

/* ---------- panels ---------- */

const CARD = "rounded-[10px] bg-[#f9f9f9] shadow-[5px_5px_5px_#c8c8c8]";

function CardTitle({ children }: { children: React.ReactNode }) {
  return (
    <div className="flex items-center justify-between leading-[42px]">
      <h4 className="text-[32px] text-black">{children}</h4>
      <button aria-label="Help">
        <FaQuestionCircle className="size-[37px] text-[#263238]" />
      </button>
    </div>
  );
}

const STATS = [
  ["6826 MWh", "Daily Energy"],
  ["2676 MWh", "Add. Energy"],
  ["685 MW", "Peak Load"],
];

function Main() {
  return (
    <main className="flex flex-1 flex-col pb-[152px] pl-[39px] pr-[30px]">
      <div role="tablist" className="grid h-[120px] grid-cols-4 border-l-2 border-[#d6d6d6] bg-[#f9f9f9] text-[32px] text-black">
        {["Main", "Detail", "Model Framework", "Parameter Panel"].map((t, i) => (
          <button
            key={t}
            role="tab"
            aria-selected={i === 0}
            className={
              i === 0
                ? "border-r-2 border-t-4 border-r-[#d6d6d6] border-t-[#1975fa]"
                : "border-b-2 border-r-2 border-t-2 border-[#d6d6d6]"
            }
          >
            {t}
          </button>
        ))}
      </div>
      <div className="mt-10 grid flex-1 grid-cols-[1393fr_1386fr] gap-10">
        <section className={`flex flex-col px-[30px] pb-[30px] pt-7 ${CARD}`}>
          <CardTitle>Manhattan Workers’ Place of Residence &amp; Power System</CardTitle>
          <div className="mt-7 flex gap-[28px] pl-[10px] text-[28px] leading-10 text-[#333]">
            <Radio name="layer" label="Commuting" checked gap />
            <Radio name="layer" label="Power System" gap />
          </div>
          <MapChart />
        </section>
        <div className="flex flex-col">
          <div className="grid grid-cols-3 gap-[30px]">
            {STATS.map(([v, l]) => (
              <div key={l} className={`relative z-20 h-[201px] px-[30px] pt-[43px] ${CARD}`}>
                <p className="text-[40px] leading-[52px] text-black">{v}</p>
                <p className="mt-[13px] text-[32px] leading-[42px] text-[#333]">{l}</p>
              </div>
            ))}
          </div>
          <section className={`relative z-20 mt-[29px] px-[30px] pb-[18px] pt-7 ${CARD}`}>
            <CardTitle>Energy Profile of Manhattan's Home-Work Commuting Activities</CardTitle>
            <div className="mt-[18px] flex items-center text-[28px] text-black">
              <label htmlFor="details">Details:</label>
              <input
                id="details"
                type="checkbox"
                className="ml-[34px] flex h-[54px] w-[90px] appearance-none items-center rounded-full bg-[#e4e4e4] pl-[5px] before:size-[44px] before:rounded-full before:border-2 before:border-[#d3d3d3] before:bg-white before:content-['']"
              />
              <label htmlFor="delay" className="ml-[34px]">Delay Type:</label>
              <div className="relative ml-8 h-[70px] w-[238px]">
                <select id="delay" className="size-full appearance-none rounded-[8px] border-2 border-[#ccc] bg-white pl-5 text-[#333]">
                  <option>Random</option>
                  <option>Custom</option>
                  <option>Earliest</option>
                  <option>Latest</option>
                </select>
                <svg viewBox="0 0 60 20" className="pointer-events-none absolute right-5 top-[28px] h-5 w-[60px]">
                  <path d="M2 2l16 16M18 2L2 18" stroke="#999" strokeWidth="4" />
                  <path d="M40 2h20l-10 11z" fill="#999" />
                </svg>
              </div>
            </div>
            <EnergyChart />
          </section>
          <div className="mt-10 grid flex-1 grid-cols-[508fr_837fr] gap-10">
            <section className={`px-[30px] pt-7 ${CARD}`}>
              <CardTitle>Travel Mode Share</CardTitle>
              <Sunburst />
            </section>
            <section className={`px-[30px] pt-7 ${CARD}`}>
              <CardTitle>Mode Choices by Subregion</CardTitle>
              <RegionBars />
            </section>
          </div>
        </div>
      </div>
    </main>
  );
}

function InfoDialog() {
  return (
    <div
      role="dialog"
      aria-label="Info"
      className="absolute bottom-[76px] left-[20%] right-[20%] z-30 rounded-[10px] bg-[#2688ff] px-[30px] pb-[30px] pt-7 text-[32px] leading-[42px] text-white"
    >
      <div className="flex items-center justify-between">
        <h4>Info</h4>
        <button aria-label="Close">
          <FaTimesCircle className="size-[37px]" />
        </button>
      </div>
      <div className="mt-4 flex flex-col gap-6">
        <p>The selected <strong><em>Energy Profile</em></strong> panel displays</p>
        <p>1) <strong><em>General</em></strong></p>
        <p>Description of the chart, and four delay types.</p>
        <p>2) <strong><em>Details</em></strong></p>
        <p>placeholder=Type something here!</p>
      </div>
    </div>
  );
}

export default function App() {
  return (
    <div className="flex min-h-screen flex-col bg-linear-to-b from-[#8ea4b4] to-[#0c161d] font-['Inter',sans-serif]">
      <MenuBar />
      <div className="flex flex-1 flex-col overflow-hidden rounded-[20px] border-t-2 border-[#4c5157]">
        <TabStrip />
        <Toolbar />
        <div className="relative flex flex-1 bg-[#f2f2f2] font-['Liberation_Sans',Arial,sans-serif]">
          <Sidebar />
          <Main />
          <div className="absolute inset-0 z-10 bg-black/60" />
          <InfoDialog />
          <button aria-label="Debug menu" className="absolute bottom-[71px] right-[70px] z-30 flex size-32 items-center justify-center rounded-full bg-[#119dff]">
            <svg viewBox="0 0 84 48" className="h-12 w-[84px]" fill="none" stroke="#fff" strokeWidth="9">
              <path d="M29 3L6 24l23 21M55 3l23 21-23 21" />
            </svg>
          </button>
        </div>
      </div>
    </div>
  );
}
